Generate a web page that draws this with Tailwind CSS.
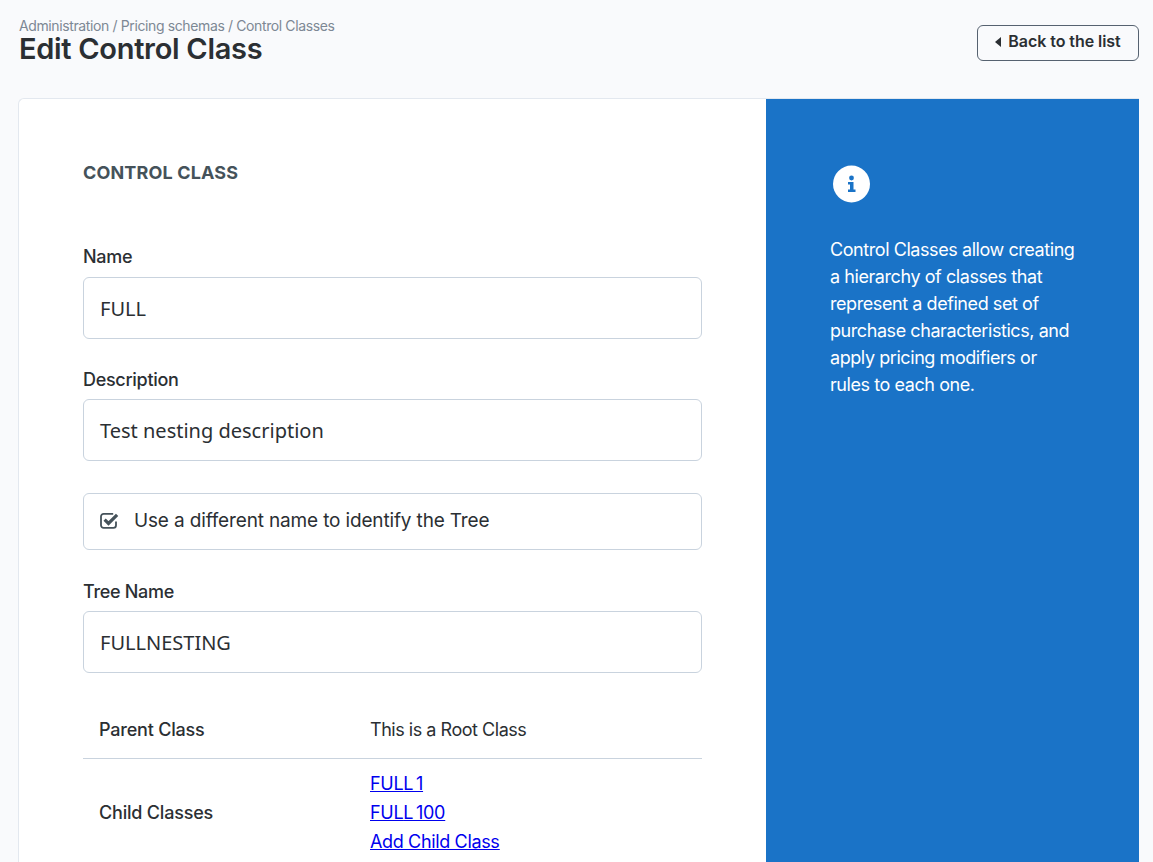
<!DOCTYPE html>
<html lang="en">
<head>
  <meta charset="UTF-8" />
  <title>Edit Control Class</title>
  <script src="https://cdn.jsdelivr.net/npm/@tailwindcss/browser@4"></script>
</head>
<body class="bg-[#f9fafc] text-[#2b2f33] font-['Inter',sans-serif] h-[862px] overflow-hidden">
  <div class="pl-[19px] pr-[14px]">
    <!-- Header -->
    <header class="flex justify-between items-start h-[98px]">
      <div class="pt-[17px]">
        <p class="text-[14px] leading-[18px] text-[#7d8894] tracking-[-0.38px]">Administration / Pricing schemas / Control Classes</p>
        <h1 class="text-[29px] leading-[28px] font-semibold tracking-[-0.3px]">Edit Control Class</h1>
      </div>
      <button class="mt-[25px] w-[162px] h-[36px] pb-[4px] flex items-center justify-center gap-[7px] border border-[#566270] rounded-[6px] text-[16px] font-semibold tracking-[-0.05px]">
        <svg width="6" height="10" viewBox="0 0 6 10" class="mt-[2px]"><path d="M6 0v10L0 5z" fill="#2b2f33"/></svg>
        Back to the list
      </button>
    </header>

    <!-- Card -->
    <main class="-ml-px flex h-[764px] bg-white border-t border-l border-[#e3e8ef] rounded-tl-[6px]">
      <section class="w-[747px] pl-[64px] pr-[64px] pt-[63px]">
        <h2 class="text-[18px] leading-[22px] font-bold text-[#45525a] tracking-[0.15px]">CONTROL CLASS</h2>

        <label class="block mt-[61px] mb-[8px] text-[18px] leading-[24px] font-medium tracking-[-0.3px]">Name</label>
        <div class="h-[62px] px-4 pt-[2px] flex items-center border border-[#c9d3de] rounded-[6px] font-['Noto_Sans',sans-serif] text-[20px]">FULL</div>

        <label class="block mt-[29px] mb-[7px] text-[18px] leading-[24px] font-medium tracking-[-0.3px]">Description</label>
        <div class="h-[62px] px-4 pt-[2px] flex items-center border border-[#c9d3de] rounded-[6px] font-['Noto_Sans',sans-serif] text-[20px]">Test nesting description</div>

        <div class="mt-[32px] h-[57px] pl-4 flex items-center gap-[15px] border border-[#c9d3de] rounded-[6px] text-[19px] tracking-[-0.15px]">
          <svg width="19" height="17" viewBox="0 0 19 17" class="shrink-0 mb-[2px]">
            <path d="M16 9.5v3.7a2.6 2.6 0 0 1-2.6 2.6H3.6A2.6 2.6 0 0 1 1 13.2V4.4a2.6 2.6 0 0 1 2.6-2.6h9.6" fill="none" stroke="#45525a" stroke-width="1.8"/>
            <path d="M4.6 7.6l3.9 3.9 8.6-8.6" fill="none" stroke="#45525a" stroke-width="3.2"/>
          </svg>
          <span>Use a different name to identify the Tree</span>
        </div>

        <label class="block mt-[30px] mb-[7px] text-[18px] leading-[24px] font-medium tracking-[-0.3px]">Tree Name</label>
        <div class="h-[62px] px-4 pt-[2px] flex items-center border border-[#c9d3de] rounded-[6px] font-['Noto_Sans',sans-serif] text-[20px]">FULLNESTING</div>

        <div class="mt-[32px] h-[54px] pb-[4px] flex items-center border-b border-[#c9d3de] text-[18px] tracking-[-0.3px]">
          <span class="w-[287px] pl-4 font-medium tracking-[-0.2px]">Parent Class</span>
          <span class="tracking-[-0.47px]">This is a Root Class</span>
        </div>
        <div class="pt-[10px] flex items-center text-[18px] tracking-[-0.3px]">
          <span class="w-[287px] pl-4 font-medium tracking-[-0.2px]">Child Classes</span>
          <div class="flex flex-col leading-[29px] text-[#0000ee] underline">
            <a href="#">FUL<span class="tracking-[2.5px]">L</span>1</a>
            <a href="#">FUL<span class="tracking-[2.5px]">L</span>100</a>
            <a href="#" class="tracking-[-0.35px]">Add Child Class</a>
          </div>
        </div>
      </section>

      <aside class="w-[373px] bg-[#1a73c7] text-white pl-[64px] pr-[60px] pt-[66px]">
        <svg width="38" height="38" viewBox="0 0 38 38" class="ml-[2px]">
          <circle cx="19.5" cy="19" r="18.5" fill="#fff"/>
          <circle cx="19.5" cy="13" r="2.4" fill="#1a73c7"/>
          <path d="M16 17h5.5v7.5h2V27h-7.5v-2.5h2v-5h-2z" fill="#1a73c7"/>
        </svg>
        <p class="mt-[33px] text-[18px] leading-[27px] tracking-[-0.43px]">Control Classes allow creating a hierarchy of classes that represent a defined set of purchase characteristics, and apply pricing modifiers or rules to each one.</p>
      </aside>
    </main>
  </div>
</body>
</html>
